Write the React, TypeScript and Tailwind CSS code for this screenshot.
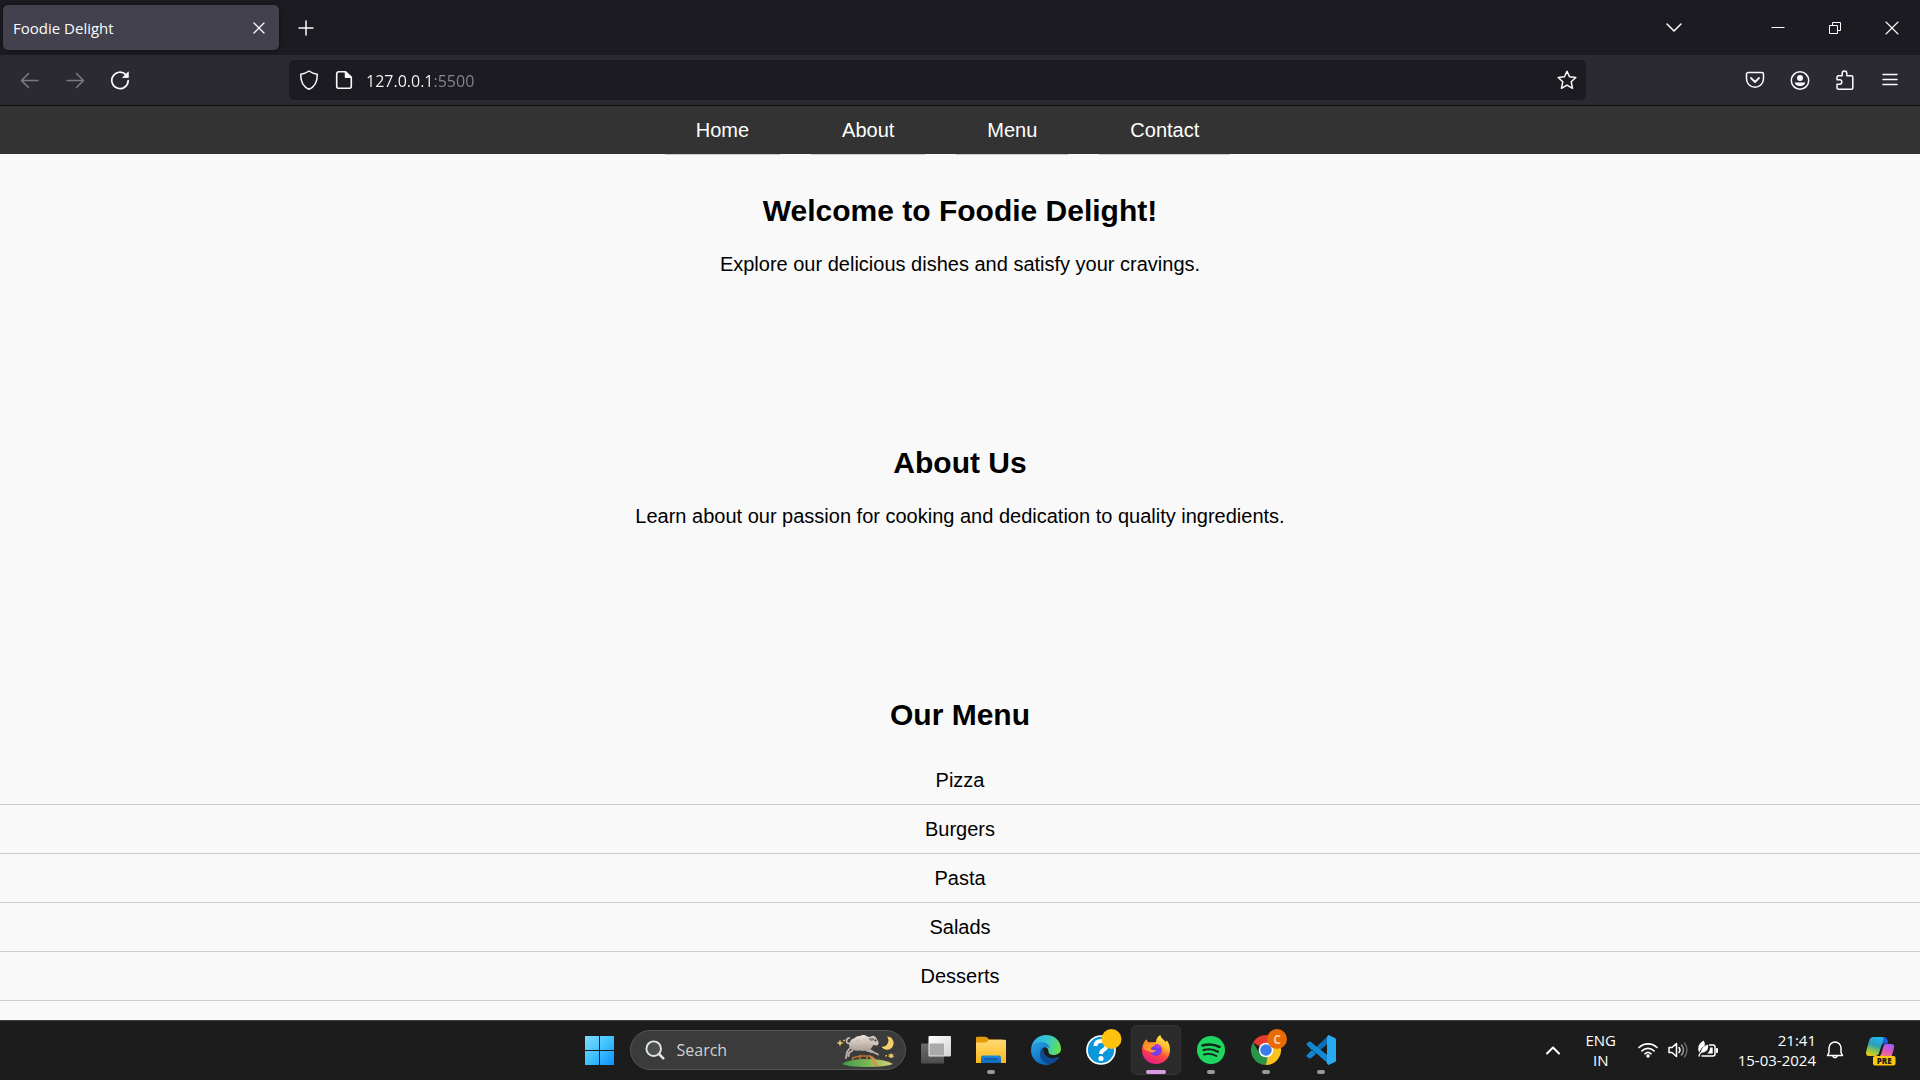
import React from "react";

type IconProps = { className?: string; children?: React.ReactNode };

function Line({ className = "size-5", children }: IconProps) {
  return (
    <svg viewBox="0 0 20 20" className={className} fill="none" stroke="currentColor" strokeWidth="1.5" strokeLinecap="round" strokeLinejoin="round" aria-hidden="true">
      {children}
    </svg>
  );
}

function ToolButton({ label, dim, children }: { label: string; dim?: boolean; children: React.ReactNode }) {
  return (
    <button
      type="button"
      aria-label={label}
      disabled={dim}
      className={`flex h-10 w-[45px] shrink-0 items-center justify-center ${dim ? "text-[#7c7b82]" : "text-[#fbfbfe]"}`}
    >
      {children}
    </button>
  );
}

function TitleBar() {
  return (
    <div className="flex h-[55px] shrink-0 items-center bg-[#1c1b22] text-[#fbfbfe]">
      <div className="ml-[3px] flex h-[45px] w-[276px] items-center justify-between rounded-[5px] bg-[#42414d] pr-[10px] pl-[10px] shadow-[0_0_4px_rgba(0,0,0,0.5)]">
        <span className="text-[15px] leading-5">Foodie Delight</span>
        <button type="button" aria-label="Close tab" className="flex size-5 items-center justify-center">
          <Line>
            <path d="M5 5l10 10M15 5L5 15" strokeWidth="1.3" />
          </Line>
        </button>
      </div>
      <button type="button" aria-label="New tab" className="ml-1 flex h-10 w-[45px] items-center justify-center">
        <Line>
          <path d="M10 3v14M3 10h14" />
        </Line>
      </button>
      <div className="flex-1" />
      <button type="button" aria-label="List all tabs" className="mr-[53px] flex h-10 w-[45px] items-center justify-center">
        <Line>
          <path d="M3 6l7 7 7-7" />
        </Line>
      </button>
      <button type="button" aria-label="Minimize" className="flex h-full w-[57px] items-center justify-center">
        <Line>
          <path d="M4 9.5h12" strokeWidth="1" strokeLinecap="square" />
        </Line>
      </button>
      <button type="button" aria-label="Restore" className="flex h-full w-[57px] items-center justify-center">
        <svg viewBox="0 0 20 20" className="size-5" fill="none" stroke="currentColor" aria-hidden="true">
          <path d="M4.500 7.500h8v8h-8zM7.500 7.500v-3h8v8h-3" />
        </svg>
      </button>
      <button type="button" aria-label="Close" className="flex h-full w-[57px] items-center justify-center">
        <Line>
          <path d="M4 4l12 12M16 4L4 16" strokeWidth="1.1" />
        </Line>
      </button>
    </div>
  );
}

function ToolBar() {
  return (
    <div className="flex h-[51px] shrink-0 items-center border-b border-[#0c0c0d] bg-[#2b2a33] pr-2 pl-[7px]">
      <ToolButton label="Back" dim>
        <Line>
          <path d="M18 10.500H1.500M8.500 3.500l-7 7 7 7" />
        </Line>
      </ToolButton>
      <ToolButton label="Forward" dim>
        <Line>
          <path d="M2 10.500h16.500M11.500 3.500l7 7-7 7" />
        </Line>
      </ToolButton>
      <ToolButton label="Reload">
        <Line>
          <path d="M15.800 4.600A8.200 8.200 0 1 0 18.200 10.500" strokeWidth="1.700" />
          <path d="M18.300 2.200v5.300h-5.300z" fill="currentColor" strokeWidth="0.800" />
        </Line>
      </ToolButton>
      <div className="w-[147px] shrink-0" />
      <div className="flex h-10 min-w-0 flex-1 items-center rounded-[5px] bg-[#1c1b22] text-[#fbfbfe]">
        <button type="button" aria-label="Tracking protection" className="ml-[10px] flex size-5 items-center justify-center">
          <Line>
            <path d="M10 1C7.500 2.800 4.800 3.800 1.800 4.300C1.500 11.500 4 16.500 10 19.200C16 16.500 18.500 11.500 18.200 4.300C15.200 3.800 12.500 2.800 10 1z" />
          </Line>
        </button>
        <button type="button" aria-label="Site information" className="ml-[15px] flex size-5 items-center justify-center">
          <Line>
            <path d="M4.500 1.800h7L17.300 7.300v9a2 2 0 0 1-2 2H4.700a2 2 0 0 1-2-2V3.800a2 2 0 0 1 2-2z" strokeWidth="1.600" />
            <path d="M11.500 2v5.300h5.600z" fill="currentColor" />
          </Line>
        </button>
        <input
          type="text"
          aria-label="Address"
          defaultValue="127.0.0.1:5500"
          className="mt-px ml-3 h-7 min-w-0 flex-1 bg-[linear-gradient(to_right,#fbfbfe_68px,#87868d_68px)] bg-clip-text text-[16px] leading-7 text-transparent caret-white outline-none"
        />
        <button type="button" aria-label="Bookmark this page" className="mr-[9px] flex size-5 items-center justify-center">
          <Line>
            <path d="M10 1.200l2.500 5.600 6.300.7-4.600 4.200 1.300 6.600L10 15.200l-5.500 3.100 1.300-6.600L1.200 7.500l6.300-.7z" />
          </Line>
        </button>
      </div>
      <div className="w-[146px] shrink-0" />
      <ToolButton label="Save to Pocket">
        <Line>
          <path d="M3.200 2.500h13.600a1.700 1.700 0 0 1 1.700 1.700v4.600a8.500 8.500 0 0 1-17 0V4.200a1.700 1.700 0 0 1 1.700-1.700z" />
          <path d="M6 8l4 4 4-4" strokeWidth="1.800" />
        </Line>
      </ToolButton>
      <ToolButton label="Account">
        <Line>
          <circle cx="10" cy="10.500" r="8.700" />
          <circle cx="10" cy="8" r="3" fill="currentColor" stroke="none" />
          <path d="M4.800 12.500h10.400c0 1.800-2.200 3.500-5.200 3.500s-5.200-1.700-5.200-3.500z" fill="currentColor" stroke="none" />
        </Line>
      </ToolButton>
      <ToolButton label="Extensions">
        <Line>
          <path d="M7.200 5.800V3.200a2.300 2.300 0 0 1 4.600 0v2.600h4.700a1.300 1.300 0 0 1 1.300 1.300v10.800a1.300 1.300 0 0 1-1.300 1.300H3.300A1.300 1.300 0 0 1 2 17.900v-3.700h2.600a2.200 2.200 0 0 0 0-4.400H2V7.100a1.300 1.300 0 0 1 1.300-1.300z" />
        </Line>
      </ToolButton>
      <ToolButton label="Open application menu">
        <Line>
          <path d="M3 4.500h14M3 9.500h14M3 14.500h14" />
        </Line>
      </ToolButton>
    </div>
  );
}

const links = ["Home", "About", "Menu", "Contact"];
const dishes = ["Pizza", "Burgers", "Pasta", "Salads", "Desserts"];

function Section({ id, title, children }: { id: string; title: string; children: React.ReactNode }) {
  return (
    <section id={id} className="min-h-[252px] shrink-0 pt-10 text-center">
      <h2 className="mb-6 text-[30px] leading-[34px] font-bold">{title}</h2>
      {children}
    </section>
  );
}

function Site() {
  return (
    <main className="flex min-h-0 flex-1 flex-col overflow-hidden bg-[#f9f9f9] font-['Liberation_Sans',Arial,sans-serif] text-[20px] leading-6 text-black">
      <nav className="h-12 shrink-0 bg-[#333333] pr-[25px]">
        <ul className="flex justify-center gap-[31px]">
          {links.map((l) => (
            <li key={l} className="border-b border-[#cccccc] px-[31px] py-3">
              <a href={`#${l.toLowerCase()}`} className="text-white">
                {l}
              </a>
            </li>
          ))}
        </ul>
      </nav>
      <Section id="home" title="Welcome to Foodie Delight!">
        <p>Explore our delicious dishes and satisfy your cravings.</p>
      </Section>
      <Section id="about" title="About Us">
        <p>Learn about our passion for cooking and dedication to quality ingredients.</p>
      </Section>
      <Section id="menu" title="Our Menu">
        <ul>
          {dishes.map((d) => (
            <li key={d} className="border-b border-[#cccccc] py-3">
              {d}
            </li>
          ))}
        </ul>
      </Section>
    </main>
  );
}

function AppIcon({ children }: { children: React.ReactNode }) {
  return (
    <svg viewBox="0 0 30 30" className="size-[30px] overflow-visible" aria-hidden="true">
      {children}
    </svg>
  );
}

function TaskItem({ label, active, running, children }: { label: string; active?: boolean; running?: boolean; children: React.ReactNode }) {
  return (
    <button
      type="button"
      aria-label={label}
      className={`relative flex size-[50px] shrink-0 items-center justify-center rounded-[5px] border ${active ? "border-[#333333] bg-[#2b2b2b]" : "border-transparent"}`}
    >
      {children}
      {active && <span className="absolute bottom-0 left-[14px] h-1 w-5 rounded-full bg-[#d99ce3]" />}
      {running && <span className="absolute bottom-0 left-5 h-1 w-2 rounded-full bg-[#9a9a9a]" />}
    </button>
  );
}

function SheepScene() {
  return (
    <svg viewBox="0 0 60 34" className="h-[34px] w-[60px] shrink-0" aria-hidden="true">
      <defs>
        <linearGradient id="hill">
          <stop offset="0" stopColor="#3f9a4a" />
          <stop offset="0.500" stopColor="#79b653" />
          <stop offset="1" stopColor="#e2d27a" />
        </linearGradient>
        <linearGradient id="wool" x1="0" y1="0" x2="0" y2="1">
          <stop offset="0" stopColor="#ece3da" />
          <stop offset="1" stopColor="#ab9e94" />
        </linearGradient>
      </defs>
      <path d="M5 31Q12 26 30 26T56 31Q49 34 30 34T5 31z" fill="url(#hill)" />
      <path d="M16 28v-4M23 27v-5M30 27v-4M15 25l8-2h10l4 2M33 23l5 3" stroke="#b8732f" strokeWidth="1.700" fill="none" />
      <path d="M32 23l6 3 3 7h-3l-3-6z" fill="#d9924a" />
      <path d="M13 15l-3 4-1 6M16 17l-4 3-.5 3M33 17l4 2.500 4 2M29 17l6 2" stroke="#bcb0a6" strokeWidth="1.900" fill="none" strokeLinecap="round" strokeLinejoin="round" />
      <path d="M13.500 10q-4 1-4-2t3-3" fill="none" stroke="#cfc4bb" strokeWidth="1.600" strokeLinecap="round" />
      <path d="M13 10q0-4 4-4.500 2-3 6-2.500 4-2 7 .5 4.500 0 5.500 4 2.500 3 0 6-2 4-6 3.500-3 1.500-7 .5-4 1-6-1-4 0-4-3-1.500-1.500.5-3.500z" fill="url(#wool)" />
      <path d="M19 7q2 2 4 0M26 6q2 2 4 0M20 12q2 2 4 0M27 11q2 2 4 0" stroke="#c3b8ae" fill="none" strokeWidth="0.800" />
      <path d="M32 5q4-4 7-.5l2.500 4.500q.5 3.500-2.500 3.500-3 0-5-3.500z" fill="#cfc5bd" />
      <path d="M31 5.500l6-.5.500 2-3.500 1z" fill="#8a7d74" />
      <circle cx="38.500" cy="7.500" r="0.900" fill="#2b2522" />
      <path d="M50 3.500a6.600 6.600 0 1 1-5.500 10.200A6.300 6.300 0 0 0 50 3.500z" fill="#f5cf68" />
      <path d="M3 6.500l1 2.500 3 1-3 1-1 2.500L2 11l-3-1 3-1zM7 6l.5 1 1 .5-1 .5L7 9l-.5-1-1-.5 1-.5zM54 20l1 1.500 1.700-.7-.7 1.700 1 1.500-1.500.2L54 25.500l-1-1.500-1.700.2.700-1.500-.7-1.500 1.700.3zM48.500 22H50v1.500h-1.500z" fill="#e6c468" />
    </svg>
  );
}

function TaskBar() {
  return (
    <footer className="grid h-[60px] shrink-0 grid-cols-[1fr_auto_1fr] items-center border-t border-[#3d3f40] bg-[#1c1c1c] pb-px text-white">
      <div />
      <div className="flex items-center gap-[5px]">
        <TaskItem label="Start">
          <AppIcon>
            <defs>
              <linearGradient id="win" x1="0" y1="0" x2="30" y2="30" gradientUnits="userSpaceOnUse">
                <stop offset="0" stopColor="#86dcff" />
                <stop offset="0.500" stopColor="#3fc2fd" />
                <stop offset="1" stopColor="#0a8ffb" />
              </linearGradient>
            </defs>
            <path d="M0 1h14v14H0zM15 1h14v14H15zM0 16h14v14H0zM15 16h14v14H15z" fill="url(#win)" />
          </AppIcon>
        </TaskItem>
        <div className="flex h-10 w-[276px] items-center rounded-full border border-[#555555] bg-[#3b3b3b] pr-2 pl-[14px]">
          <label htmlFor="task-search" aria-label="Search" className="shrink-0">
            <svg viewBox="0 0 20 20" className="size-5" fill="#4b4f50" stroke="#e3e6e7" aria-hidden="true">
              <circle cx="8.700" cy="8.700" r="7.300" strokeWidth="1.900" />
              <path d="M14 14l4.300 4.300" strokeWidth="2.500" strokeLinecap="round" />
            </svg>
          </label>
          <input
            id="task-search"
            type="text"
            placeholder="Search"
            className="ml-3 h-8 min-w-0 flex-1 bg-transparent text-[16px] leading-8 text-white outline-none placeholder:text-[#d0d0d0]"
          />
          <SheepScene />
        </div>
        <TaskItem label="Task view">
          <AppIcon>
            <defs>
              <linearGradient id="tv1" x1="0" y1="0" x2="0" y2="1">
                <stop offset="0" stopColor="#6c6c6c" />
                <stop offset="1" stopColor="#4d4d4d" />
              </linearGradient>
              <linearGradient id="tv2" x1="0" y1="0" x2="1" y2="1">
                <stop offset="0" stopColor="#ffffff" />
                <stop offset="1" stopColor="#d2d2d2" />
              </linearGradient>
            </defs>
            <rect x="0" y="8.500" width="23" height="20" rx="1" fill="url(#tv1)" />
            <rect x="7.500" y="1" width="22.500" height="20.500" rx="1" fill="url(#tv2)" />
            <path d="M8.500 8.500H23v12H8.500z" fill="#aaaaaa" />
          </AppIcon>
        </TaskItem>
        <TaskItem label="File Explorer" running>
          <AppIcon>
            <defs>
              <linearGradient id="fold" x1="0" y1="0" x2="0" y2="1">
                <stop offset="0" stopColor="#ffd975" />
                <stop offset="1" stopColor="#fdb714" />
              </linearGradient>
              <linearGradient id="foldb" x1="0" y1="0" x2="0" y2="1">
                <stop offset="0" stopColor="#1b8be0" />
                <stop offset="1" stopColor="#1068bb" />
              </linearGradient>
            </defs>
            <path d="M0 3q0-1.200 1.200-1.200h8q1 0 2 .8l2 1.900H26V12H0z" fill="#e09c0c" />
            <path d="M0 7.500h10l3-2.700H29q1 0 1 1V28H0z" fill="url(#fold)" />
            <path d="M5 28v-5.500Q5 20.500 7 20.500h16q2 0 2 2V28z" fill="url(#foldb)" />
            <path d="M8.500 24h13" stroke="#083f7d" strokeWidth="1" />
          </AppIcon>
        </TaskItem>
        <TaskItem label="Microsoft Edge">
          <AppIcon>
            <defs>
              <linearGradient id="edgeTop" x1="0" y1="0.300" x2="1" y2="0.500">
                <stop offset="0" stopColor="#2dacec" />
                <stop offset="0.500" stopColor="#35c6ce" />
                <stop offset="1" stopColor="#69e04f" />
              </linearGradient>
              <linearGradient id="edgeBody" x1="0" y1="0" x2="0.600" y2="1">
                <stop offset="0" stopColor="#2aa4e4" />
                <stop offset="1" stopColor="#0b67bd" />
              </linearGradient>
            </defs>
            <path d="M0.500 12C1 18 7 12 13 12c3 0 4.500 2 4.500 4.500 0 2 1.500 3.500 5 3.500 4.500 0 7.500-2.500 7.500-6C30 6 23.500 0 15 0 7.500 0 1.500 5 .5 12z" fill="url(#edgeTop)" />
            <path d="M0 15.500C0 8.500 5.500 7 10 7c5.500 0 9 3.500 9 7-1.500-2.500-7-3-9 1.500-2 6 2.500 12 9.500 13.800C9 32 0 25 0 15.500z" fill="url(#edgeBody)" />
            <path d="M12.500 13C6 17.500 8.500 27 19 29.300c4-1.200 7-3.300 8.800-6.500.3-.8-.3-1.200-1-.9C19 25.500 11.500 21 12.500 13z" fill="#104a93" />
          </AppIcon>
        </TaskItem>
        <TaskItem label="Get Help">
          <AppIcon>
            <circle cx="15" cy="15" r="14" fill="#0a97dc" stroke="#ffffff" strokeWidth="1.700" />
            <path d="M9.500 11q0-5 5.500-5t5.500 4.500q0 3-3 4.500-2.500 1.300-2.500 4" stroke="#ffffff" strokeWidth="3.900" fill="none" />
            <circle cx="15" cy="23.500" r="2.600" fill="#ffffff" />
            <circle cx="25.500" cy="4" r="10" fill="#ffc20e" />
          </AppIcon>
        </TaskItem>
        <TaskItem label="Firefox" active>
          <AppIcon>
            <defs>
              <linearGradient id="ff" x1="0.800" y1="0" x2="0.300" y2="1">
                <stop offset="0" stopColor="#fff150" />
                <stop offset="0.350" stopColor="#ffb52b" />
                <stop offset="0.600" stopColor="#ff4b3e" />
                <stop offset="1" stopColor="#e81887" />
              </linearGradient>
              <linearGradient id="ffo" x1="0" y1="0" x2="1" y2="1">
                <stop offset="0" stopColor="#ff7a1a" />
                <stop offset="1" stopColor="#ffb22e" />
              </linearGradient>
            </defs>
            <path d="M15 7C15 4 17 1 19.500 0c0 3 3 4 5 7l1.500-1.500C28.500 9 29 12 29 15c0 8-6 14-14 14S1 23 1 15.500C1 10 3 7 5.500 4.500L7 8z" fill="url(#ff)" />
            <circle cx="15" cy="15" r="6" fill="#7a3be6" />
            <path d="M15 9c4 0 6.500 3 6 6.500-1-3-4-3-6-2.500z" fill="#b03ce0" />
            <path d="M2 13C2 8.500 3.500 6 5.500 4.500 6 6 7 7.500 8.500 7.500c3-.5 5 .5 6 2-1 2.500-4.500 2-4.500 4s2.500 2 5 1.500c-1.500 3-5.500 3-7.500 1-2 0-4-1-5.500-3z" fill="url(#ffo)" />
          </AppIcon>
        </TaskItem>
        <TaskItem label="Spotify" running>
          <AppIcon>
            <circle cx="15" cy="15" r="14" fill="#1ed760" />
            <g stroke="#16251b" fill="none" strokeLinecap="round">
              <path d="M6.500 10.500c6-1.600 12-1.200 17 1.500" strokeWidth="2.600" />
              <path d="M7.500 15c5-1.400 10-.8 14.500 1.700" strokeWidth="2.200" />
              <path d="M8 19.500c4.500-1.200 8.500-.6 12.500 1.500" strokeWidth="1.900" />
            </g>
          </AppIcon>
        </TaskItem>
        <TaskItem label="Google Chrome" running>
          <AppIcon>
            <path d="M15 15L2 7.500A15 15 0 0 1 28 7.500z" fill="#e33b2e" />
            <path d="M15 15L28 7.500A15 15 0 0 1 15 30l-3-5z" fill="#fcc31e" />
            <path d="M2 7.500L9 19l7.500 3L15 30A15 15 0 0 1 2 7.500z" fill="#2a9447" />
            <path d="M15 8h13.300l1.200 4-10 8z" fill="#fcc31e" />
            <circle cx="15" cy="15" r="7.300" fill="#ffffff" />
            <circle cx="15" cy="15" r="5.800" fill="#3a7cf0" />
            <circle cx="26" cy="4" r="10" fill="#e96b06" />
            <text x="26" y="8.500" textAnchor="middle" fontSize="12" fontWeight="700" fill="#f8cba5" fontFamily="Open Sans, sans-serif">
              C
            </text>
          </AppIcon>
        </TaskItem>
        <TaskItem label="Visual Studio Code" running>
          <AppIcon>
            <path d="M1 20.500L21.500 1.500V9L4.500 23z" fill="#0b6fb8" />
            <path d="M4.500 7L22 20.500v8L1 10z" fill="#1289d4" />
            <path d="M1 10Q-.5 9 1 8.200L3 6.800Q4 6.300 5 7l4.500 3.700-4.300 4zM1 20Q-.5 21 1 21.800l2 1.400Q4 23.700 5 23L9.500 19.500l-4-4.300z" fill="#1285cf" />
            <path d="M21 1.500V28.500L22.500 30 29 27q1-.5 1-1.500v-21q0-1-1-1.500L22.500 0z" fill="#2aa9f3" />
          </AppIcon>
        </TaskItem>
      </div>
      <div className="flex items-center justify-end pr-[25px] text-[15px] leading-5">
        <button type="button" aria-label="Show hidden icons" className="flex h-10 w-8 items-center justify-center">
          <Line>
            <path d="M4 13.500l6-6 6 6" strokeWidth="2" />
          </Line>
        </button>
        <button type="button" aria-label="Language: English, India" className="ml-[14px] w-9 text-center">
          ENG
          <br />
          IN
        </button>
        <button type="button" aria-label="Network, volume and battery" className="ml-[19px] flex items-center gap-[10px]">
          <Line>
            <path d="M1 7.500a13 13 0 0 1 18 0M4 10.800a8.600 8.600 0 0 1 12 0M7 13.800a4.500 4.500 0 0 1 6 0" strokeWidth="1.700" />
            <circle cx="10" cy="16" r="1.700" fill="currentColor" stroke="none" />
          </Line>
          <Line>
            <path d="M1 7.500h3L8.500 3.500v13L4 12.500H1z" />
            <path d="M11 7.500q2 2.500 0 5" />
            <path d="M13.500 5q4 5 0 10" stroke="#9a9a9a" />
            <path d="M16.500 3q5 7 0 14" stroke="#666666" />
          </Line>
          <Line>
            <path d="M11.500 5h3.500a2 2 0 0 1 2 2v7a2 2 0 0 1-2 2H4" />
            <path d="M19 9v3" strokeWidth="2.200" />
            <path d="M12 7.500h2.700v6H9q3-2 3-6z" fill="currentColor" stroke="none" />
            <path d="M5.500.5C1.500 3-.5 6 .5 11l1.200 1.200Q2.500 8 6.500 6 7.500 3 5.500.5z" fill="currentColor" stroke="none" />
            <path d="M10 4.500C5 6.500 3 9 3 12.500c4.500.5 8-2.500 7-8z" fill="currentColor" stroke="none" />
            <path d="M1 16q.5-2.500 2.500-4" strokeWidth="1.300" />
          </Line>
        </button>
        <button type="button" aria-label="Clock" className="ml-5 text-right">
          21:41
          <br />
          15-03-2024
        </button>
        <button type="button" aria-label="Notifications" className="ml-[9px] flex size-5 items-center justify-center">
          <Line>
            <path d="M10 2a6 6 0 0 0-6 6v4.500L2.500 15.500h15L16 12.500V8a6 6 0 0 0-6-6zM7.800 16a2.300 2.300 0 0 0 4.400 0" />
          </Line>
        </button>
        <button type="button" aria-label="Copilot preview" className="ml-5 flex items-center justify-center">
          <svg viewBox="0 0 30 30" className="size-[30px] overflow-visible" aria-hidden="true">
            <defs>
              <linearGradient id="cpl" x1="0.500" y1="0" x2="0.200" y2="1">
                <stop offset="0" stopColor="#20b4ee" />
                <stop offset="0.400" stopColor="#2f9fb5" />
                <stop offset="0.700" stopColor="#8fc74a" />
                <stop offset="1" stopColor="#f5c518" />
              </linearGradient>
              <linearGradient id="cpr" x1="0.700" y1="0" x2="0.300" y2="1">
                <stop offset="0" stopColor="#9b5cf5" />
                <stop offset="0.500" stopColor="#d957c0" />
                <stop offset="1" stopColor="#ff7f6e" />
              </linearGradient>
            </defs>
            <path d="M14 2h5q2.500 0 3.200 2.500L23.500 8.500h-4Q17 8.500 16 11z" fill="#1f5fe0" />
            <path d="M8.500 2H17q2 0 1.500 2L14 18q-1 3-4 3H4q-3.500 0-3-4L4 6q1.300-4 4.500-4z" fill="url(#cpl)" />
            <path d="M20.500 9H26q4 0 3 4l-2.500 9H12q3.500 0 4.500-4L18.500 11q.5-2 2-2z" fill="url(#cpr)" />
            <rect x="8" y="21" width="22.500" height="9.500" rx="2" fill="#fdc70c" />
            <text x="19.200" y="28.600" textAnchor="middle" fontSize="8" fontWeight="800" fill="#1c1c1c" fontFamily="Open Sans, sans-serif">
              PRE
            </text>
          </svg>
        </button>
      </div>
    </footer>
  );
}

export default function App() {
  return (
    <div className="flex h-screen flex-col overflow-hidden font-['Open_Sans','Noto_Sans',sans-serif]">
      <TitleBar />
      <ToolBar />
      <Site />
      <TaskBar />
    </div>
  );
}
